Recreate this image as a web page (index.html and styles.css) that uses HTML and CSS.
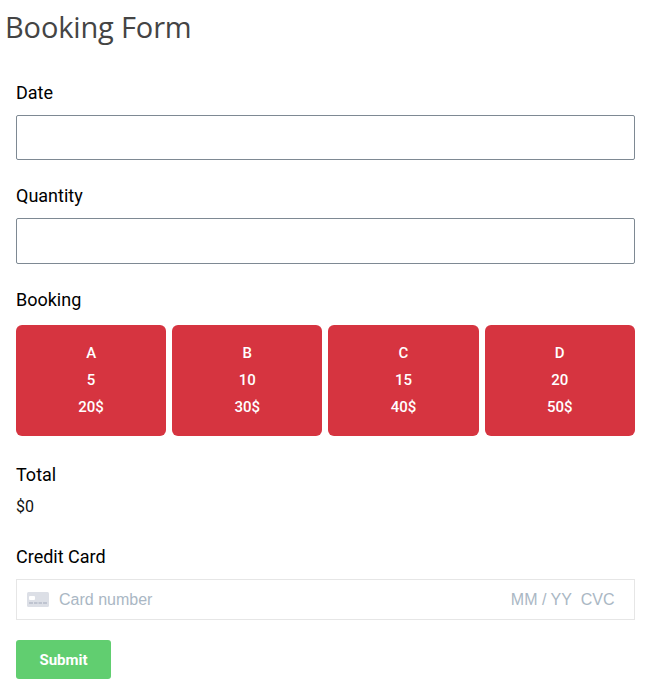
FILE: index.html
```
<!DOCTYPE html>
<html lang="en">

<head>
    <title>Booking Form</title>
    <meta charset="utf-8">
    <meta name="viewport" content="width=device-width, initial-scale=1.0">
    <link rel="stylesheet" href="styles.css">
</head>

<body>
    <h1>Booking Form</h1>

    <form class="booking-form">
        <div class="field">
            <label for="date">Date</label>
            <input class="text-input" id="date" type="text">
        </div>

        <div class="field quantity">
            <label for="quantity">Quantity</label>
            <input class="text-input" id="quantity" type="text">
        </div>

        <div class="field booking">
            <label>Booking</label>
            <div class="options">
                <button class="option" type="button">A<br>5<br>20$</button>
                <button class="option" type="button">B<br>10<br>30$</button>
                <button class="option" type="button">C<br>15<br>40$</button>
                <button class="option" type="button">D<br>20<br>50$</button>
            </div>
        </div>

        <div class="field total">
            <label>Total</label>
            <p class="amount">$0</p>
        </div>

        <div class="field credit-card">
            <label for="card">Credit Card</label>
            <div class="card-box">
                <svg class="card-icon" width="22" height="15" viewBox="0 0 22 15">
                    <rect width="22" height="15" rx="1.5" fill="#dcdfe6" />
                    <rect x="2" y="4" width="6" height="4" rx="1" fill="#fff" />
                    <path d="M2 11h4M7 11h3.500M11.500 11h3.500M16 11h4" stroke="#b5bcc9" stroke-width="1.400" />
                </svg>
                <input class="card-number" id="card" type="text" placeholder="Card number">
                <input class="card-date" type="text" placeholder="MM / YY">
                <input class="card-cvc" type="text" placeholder="CVC">
            </div>
        </div>

        <button class="submit" type="submit">Submit</button>
    </form>
</body>

</html>
```

FILE: styles.css
```
* {
    box-sizing: border-box;
}

body {
    margin: 0;
    background: white;
    font-family: Roboto, sans-serif;
    color: #000;
}

h1 {
    margin: 0;
    padding: 7px 5px 0;
    height: 80px;
    font-family: "Open Sans", sans-serif;
    font-size: 29px;
    font-weight: 400;
    letter-spacing: -0.15px;
    line-height: 40px;
    color: #444;
}

.booking-form {
    padding: 0 15.2px 0 16px;
}

.field {
    display: flex;
    flex-direction: column;
    height: 103px;
}

label {
    flex: none;
    height: 35px;
    font-size: 18px;
    line-height: 26px;
}

.text-input {
    width: 100%;
    height: 45px;
    padding: 0 12px;
    border: 1px solid #7e8993;
    border-radius: 2px;
    font-size: 16px;
}

.quantity {
    height: 104px;
}

.quantity .text-input {
    height: 46px;
}

.booking {
    height: 175px;
}

.booking label {
    height: 38px;
}

.options {
    display: grid;
    grid-template-columns: repeat(4, 1fr);
    gap: 6px;
}

.option {
    height: 111px;
    padding: 0;
    border: none;
    border-radius: 6px;
    background: #d63440;
    font-family: Roboto, sans-serif;
    font-size: 15px;
    font-weight: 500;
    line-height: 27px;
    color: white;
}

.total {
    height: 82px;
}

.total label {
    height: 33px;
}

.amount {
    margin: 0;
    font-size: 16px;
    line-height: 24px;
    color: #111;
}

.credit-card {
    height: 96px;
}

.card-box {
    display: flex;
    align-items: center;
    height: 41px;
    padding: 0 18px 0 10px;
    border: 1px solid #e6e6e6;
}

.card-icon {
    flex: none;
    margin-right: 10px;
}

.card-box input {
    padding: 0;
    border: none;
    background: none;
    font-family: "Liberation Sans", Arial, sans-serif;
    font-size: 16px;
}

.card-box input::placeholder {
    color: #aab7c4;
}

.card-number {
    flex: 1;
    min-width: 0;
}

.card-date {
    width: 70px;
}

.card-cvc {
    width: 35px;
}

.submit {
    width: 95px;
    height: 39px;
    padding: 0;
    border: none;
    border-radius: 3px;
    background: #61ce70;
    font-family: Roboto, sans-serif;
    font-size: 15px;
    font-weight: 700;
    color: white;
}
```
